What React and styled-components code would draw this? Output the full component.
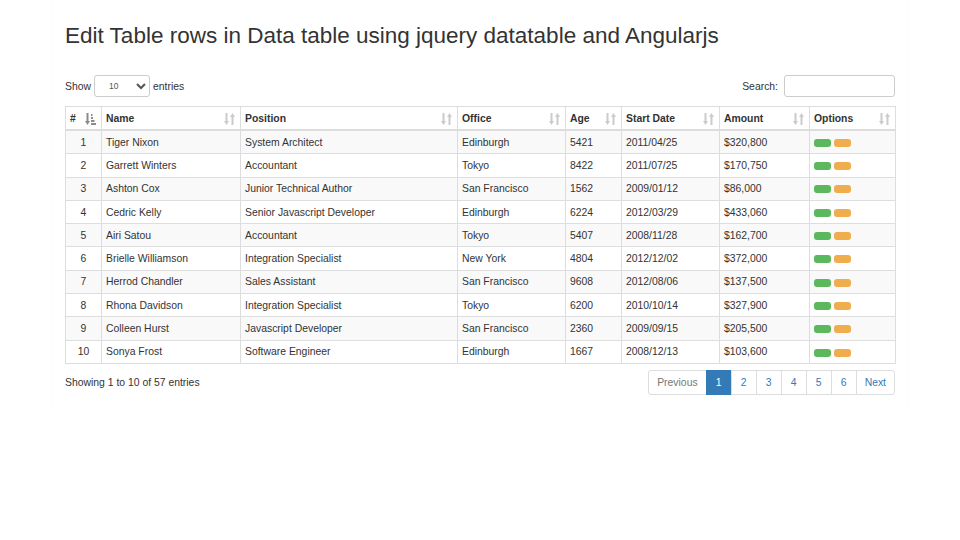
import React from 'react';
import styled, { createGlobalStyle } from 'styled-components';

const Global = createGlobalStyle`
  body {
    margin: 0;
    background: #fff;
    color: #333;
    font-family: "Liberation Sans", Arial, sans-serif;
    font-size: 10.4px;
  }
`;

const Panel = styled.div`
  width: 856px;
  margin: 0 auto;
  padding: 0 13px 17px;
  box-sizing: border-box;
  background: #fff;
  box-shadow: 0 1px 1px rgba(0, 0, 0, 0.05);
`;

const Title = styled.h2`
  margin: 0;
  padding-top: 22px;
  font-size: 22.5px;
  font-weight: 400;
  line-height: 27px;
  color: #333;
`;

const Controls = styled.div`
  display: flex;
  justify-content: space-between;
  align-items: center;
  margin-top: 26px;
  height: 22px;
`;

const Label = styled.label`
  display: flex;
  align-items: center;
  gap: 3px;
  font-size: 10.4px;
`;

const Select = styled.select`
  width: 56px;
  height: 22px;
  box-sizing: border-box;
  border: 1px solid #ccc;
  border-radius: 3px;
  background: #fff;
  font-family: inherit;
  font-size: 8.5px;
  padding: 0 4px 0 10px;
  color: #555;
`;

const Input = styled.input`
  width: 111px;
  height: 22px;
  box-sizing: border-box;
  border: 1px solid #ccc;
  border-radius: 3px;
  margin-left: 3px;
`;

const Table = styled.table`
  width: 830px;
  margin-top: 9px;
  border-collapse: collapse;
  table-layout: fixed;
  border: 1px solid #ddd;
`;

const Th = styled.th`
  position: relative;
  height: 22px;
  padding: 0 4px;
  text-align: left;
  font-weight: 700;
  border: 1px solid #ddd;
  border-bottom: 2px solid #ddd;
  white-space: nowrap;
`;

const SortIcon = styled.svg`
  position: absolute;
  right: 5px;
  top: 6px;
  opacity: ${p => (p.$active ? 0.45 : 0.2)};
`;

const Row = styled.tr`
  background: ${p => (p.$odd ? '#f9f9f9' : '#fff')};
`;

const Td = styled.td`
  height: 22.3px;
  padding: 0 4px;
  border: 1px solid #ddd;
  text-align: ${p => (p.$center ? 'center' : 'left')};
  white-space: nowrap;
  overflow: hidden;
`;

const Btn = styled.span`
  display: inline-block;
  width: 17px;
  height: 8px;
  border-radius: 3px;
  margin-right: 3px;
  vertical-align: middle;
  background: ${p => p.$color};
`;

const Footer = styled.div`
  display: flex;
  justify-content: space-between;
  align-items: center;
  margin-top: 6px;
`;

const Pager = styled.ul`
  display: flex;
  margin: 0;
  padding: 0;
  list-style: none;
`;

const Page = styled.li`
  height: 25px;
  box-sizing: border-box;
  padding: 0 ${p => (p.$wide ? 8 : 0)}px;
  min-width: 26px;
  display: flex;
  align-items: center;
  justify-content: center;
  border: 1px solid #ddd;
  margin-left: -1px;
  color: ${p => (p.$active ? '#fff' : p.$disabled ? '#777' : '#337ab7')};
  background: ${p => (p.$active ? '#337ab7' : '#fff')};
  border-color: ${p => (p.$active ? '#337ab7' : '#ddd')};
  &:first-child { border-radius: 3px 0 0 3px; }
  &:last-child { border-radius: 0 3px 3px 0; }
`;

const cols = [
  ['#', 36], ['Name', 139], ['Position', 217], ['Office', 108],
  ['Age', 56], ['Start Date', 98], ['Amount', 90], ['Options', 86],
];

const rows = [
  ['Tiger Nixon', 'System Architect', 'Edinburgh', '5421', '2011/04/25', '$320,800'],
  ['Garrett Winters', 'Accountant', 'Tokyo', '8422', '2011/07/25', '$170,750'],
  ['Ashton Cox', 'Junior Technical Author', 'San Francisco', '1562', '2009/01/12', '$86,000'],
  ['Cedric Kelly', 'Senior Javascript Developer', 'Edinburgh', '6224', '2012/03/29', '$433,060'],
  ['Airi Satou', 'Accountant', 'Tokyo', '5407', '2008/11/28', '$162,700'],
  ['Brielle Williamson', 'Integration Specialist', 'New York', '4804', '2012/12/02', '$372,000'],
  ['Herrod Chandler', 'Sales Assistant', 'San Francisco', '9608', '2012/08/06', '$137,500'],
  ['Rhona Davidson', 'Integration Specialist', 'Tokyo', '6200', '2010/10/14', '$327,900'],
  ['Colleen Hurst', 'Javascript Developer', 'San Francisco', '2360', '2009/09/15', '$205,500'],
  ['Sonya Frost', 'Software Engineer', 'Edinburgh', '1667', '2008/12/13', '$103,600'],
];

const Sort = ({ active }) => (
  <SortIcon $active={active} width="11" height="12" viewBox="0 0 11 12">
    <g fill="#000">
      <rect x="1.5" y="0" width="2" height="9" />
      <polygon points="0,8 5,8 2.5,12" />
      {active ? (
        <>
          <rect x="6" y="1" width="1.5" height="2" />
          <rect x="6" y="4" width="2" height="2" />
          <rect x="6" y="7" width="3.5" height="2" />
          <rect x="6" y="10" width="5" height="2" />
        </>
      ) : (
        <>
          <rect x="7.5" y="3" width="2" height="9" />
          <polygon points="6,4 11,4 8.5,0" />
        </>
      )}
    </g>
  </SortIcon>
);

export default function App() {
  return (
    <>
      <Global />
      <Panel>
        <Title>Edit Table rows in Data table using jquery datatable and Angularjs</Title>
        <Controls>
          <Label>
            Show
            <Select defaultValue="10">
              <option>10</option>
              <option>25</option>
              <option>50</option>
            </Select>
            entries
          </Label>
          <Label>
            Search:
            <Input type="search" />
          </Label>
        </Controls>
        <Table>
          <colgroup>
            {cols.map(([n, w]) => <col key={n} style={{ width: w }} />)}
          </colgroup>
          <thead>
            <tr>
              {cols.map(([n], i) => (
                <Th key={n}>
                  {n}
                  <Sort active={i === 0} />
                </Th>
              ))}
            </tr>
          </thead>
          <tbody>
            {rows.map((r, i) => (
              <Row key={r[0]} $odd={i % 2 === 0}>
                <Td $center>{i + 1}</Td>
                {r.map((c, j) => <Td key={j}>{c}</Td>)}
                <Td>
                  <Btn $color="#5cb85c" />
                  <Btn $color="#f0ad4e" />
                </Td>
              </Row>
            ))}
          </tbody>
        </Table>
        <Footer>
          <span>Showing 1 to 10 of 57 entries</span>
          <Pager>
            <Page $wide $disabled>Previous</Page>
            <Page $active>1</Page>
            <Page>2</Page>
            <Page>3</Page>
            <Page>4</Page>
            <Page>5</Page>
            <Page>6</Page>
            <Page $wide>Next</Page>
          </Pager>
        </Footer>
      </Panel>
    </>
  );
}
